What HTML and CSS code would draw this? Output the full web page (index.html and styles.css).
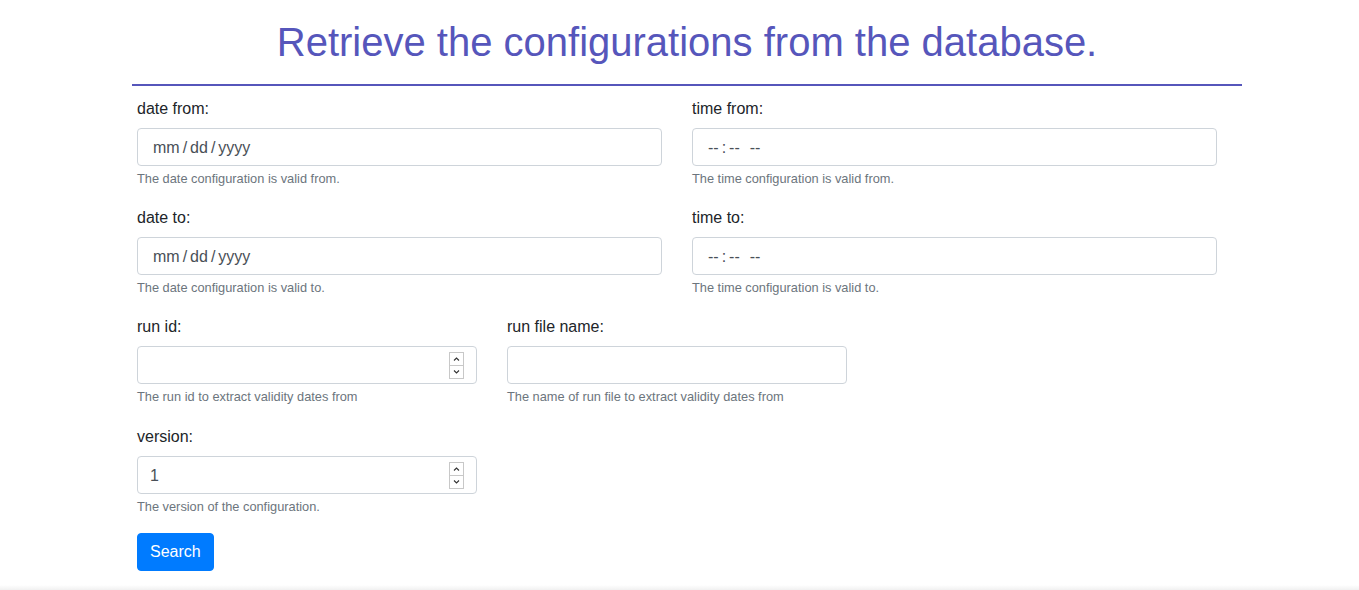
FILE: index.html
```html
<!DOCTYPE html>
<html lang="en">
<head>
<meta charset="utf-8">
<title>Retrieve configurations</title>
<link rel="stylesheet" href="styles.css">
</head>
<body>
<div class="page">
  <header class="header">
    <h1 class="title">Retrieve the configurations from the database.</h1>
  </header>
  <form class="form">
    <div class="row row-2">
      <div class="group">
        <label class="label">date from:</label>
        <div class="control fake"><span>mm</span><span class="sep">/</span><span>dd</span><span class="sep">/</span><span>yyyy</span></div>
        <small class="help">The date configuration is valid from.</small>
      </div>
      <div class="group">
        <label class="label">time from:</label>
        <div class="control fake"><span>--</span><span class="colon">:</span><span>--</span><span class="ampm">--</span></div>
        <small class="help">The time configuration is valid from.</small>
      </div>
    </div>
    <div class="row row-2">
      <div class="group">
        <label class="label">date to:</label>
        <div class="control fake"><span>mm</span><span class="sep">/</span><span>dd</span><span class="sep">/</span><span>yyyy</span></div>
        <small class="help">The date configuration is valid to.</small>
      </div>
      <div class="group">
        <label class="label">time to:</label>
        <div class="control fake"><span>--</span><span class="colon">:</span><span>--</span><span class="ampm">--</span></div>
        <small class="help">The time configuration is valid to.</small>
      </div>
    </div>
    <div class="row row-3">
      <div class="group">
        <label class="label" for="rid">run id:</label>
        <div class="field">
          <input class="control number" id="rid" type="number">
          <svg class="spin" width="15" height="27" viewBox="0 0 15 27" aria-hidden="true">
            <rect x="0.5" y="0.5" width="14" height="13" fill="#fff" stroke="#c8c8c8"/>
            <rect x="0.5" y="13.5" width="14" height="13" fill="#fff" stroke="#c8c8c8"/>
            <path d="M5 8.5 L7.5 6 L10 8.5" fill="none" stroke="#333" stroke-width="1.1"/>
            <path d="M5 18.5 L7.5 21 L10 18.5" fill="none" stroke="#333" stroke-width="1.1"/>
          </svg>
        </div>
        <small class="help">The run id to extract validity dates from</small>
      </div>
      <div class="group">
        <label class="label" for="rfn">run file name:</label>
        <input class="control" id="rfn" type="text">
        <small class="help">The name of run file to extract validity dates from</small>
      </div>
    </div>
    <div class="row row-3">
      <div class="group">
        <label class="label" for="ver">version:</label>
        <div class="field">
          <input class="control number" id="ver" type="number" value="1">
          <svg class="spin" width="15" height="27" viewBox="0 0 15 27" aria-hidden="true">
            <rect x="0.5" y="0.5" width="14" height="13" fill="#fff" stroke="#c8c8c8"/>
            <rect x="0.5" y="13.5" width="14" height="13" fill="#fff" stroke="#c8c8c8"/>
            <path d="M5 8.5 L7.5 6 L10 8.5" fill="none" stroke="#333" stroke-width="1.1"/>
            <path d="M5 18.5 L7.5 21 L10 18.5" fill="none" stroke="#333" stroke-width="1.1"/>
          </svg>
        </div>
        <small class="help">The version of the configuration.</small>
      </div>
    </div>
    <button class="btn" type="button">Search</button>
  </form>
</div>
<div class="footer-shadow"></div>
</body>
</html>
```

FILE: styles.css
```css
html, body {
  margin: 0;
  padding: 0;
  background: #fff;
}
body {
  font-family: "Liberation Sans", Arial, sans-serif;
  font-size: 16px;
  line-height: 1.5;
  color: #212529;
}
.page {
  width: 1110px;
  margin-left: 132px;
}
.header {
  padding-top: 18px;
  padding-bottom: 18px;
  border-bottom: 2px solid #5656bb;
  text-align: center;
}
.title {
  margin: 0;
  font-size: 40px;
  font-weight: 400;
  line-height: 48px;
  color: #5656bb;
}
.form {
  padding: 10px 0 0 5px;
}
.row {
  display: grid;
  column-gap: 30px;
}
.row-2 {
  grid-template-columns: 525px 525px;
}
.row-3 {
  grid-template-columns: 340px 340px;
}
.group {
  display: flex;
  flex-direction: column;
  margin-bottom: 16px;
}
.label {
  display: block;
  line-height: 24px;
  margin-top: 1px;
  margin-bottom: 7px;
}
.control {
  box-sizing: border-box;
  display: block;
  width: 100%;
  height: 38px;
  padding: 7px 12px 5px;
  font-family: "Liberation Sans", Arial, sans-serif;
  font-size: 16px;
  line-height: 24px;
  color: #495057;
  background: #fff;
  border: 1px solid #ced4da;
  border-radius: 4px;
  margin: 0;
}
.fake {
  display: flex;
  align-items: center;
  padding-left: 15px;
}
.sep {
  margin: 0 3px;
}
.colon {
  margin: 0 3px;
}
.ampm {
  margin-left: 10px;
}
.field {
  position: relative;
}
.number {
  -moz-appearance: textfield;
  appearance: textfield;
}
.number::-webkit-inner-spin-button,
.number::-webkit-outer-spin-button {
  -webkit-appearance: none;
  margin: 0;
}
.spin {
  position: absolute;
  right: 13px;
  top: 6px;
}
.help {
  display: block;
  margin-top: 3px;
  margin-bottom: 1px;
  font-size: 12.8px;
  line-height: 19.2px;
  color: #6c757d;
}
.btn {
  display: block;
  height: 38px;
  padding: 6px 12px;
  font-family: "Liberation Sans", Arial, sans-serif;
  font-size: 16px;
  line-height: 24px;
  color: #fff;
  background: #007bff;
  border: 1px solid #007bff;
  border-radius: 4px;
}
.footer-shadow {
  margin-top: 14px;
  height: 6px;
  background: linear-gradient(#ffffff, #eeeeee);
}
```
